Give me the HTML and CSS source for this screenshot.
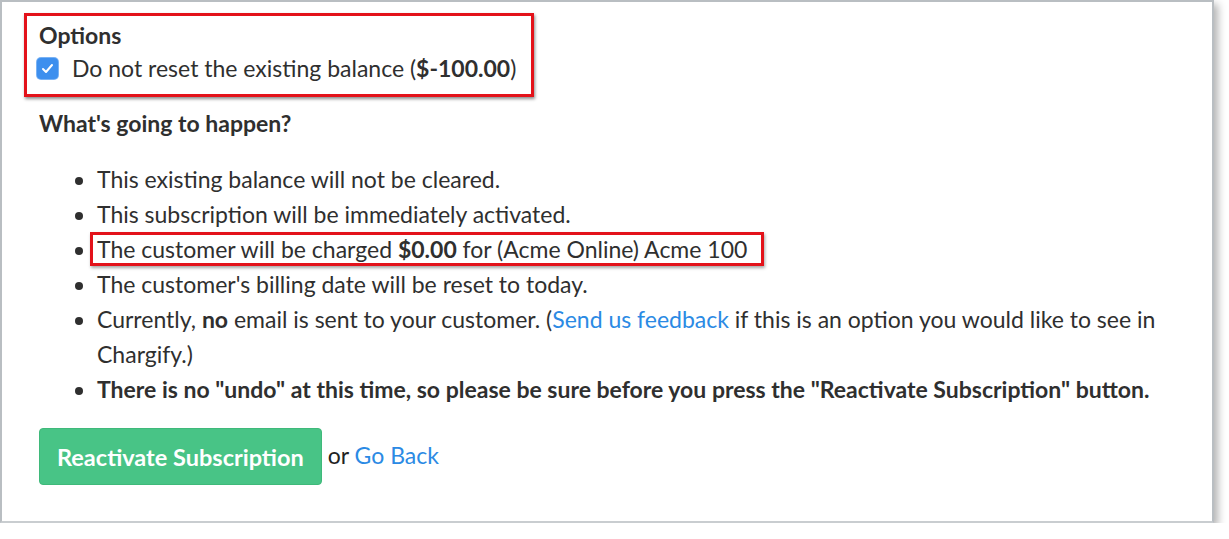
FILE: index.html
```html
<!DOCTYPE html>
<html>
<head>
<meta charset="utf-8">
<link rel="stylesheet" href="styles.css">
</head>
<body>
<div class="frame">
  <div class="options">
    <div class="options-title">Options</div>
    <label class="check-row">
      <span class="checkbox"><svg viewBox="0 0 21 21" width="21" height="21"><path d="M6 11 L9 14 L15 7" fill="none" stroke="#fff" stroke-width="2" stroke-linecap="round" stroke-linejoin="round"/></svg></span>
      <span>Do not reset the existing balance (<b>$-100.00</b>)</span>
    </label>
  </div>
  <h3 class="heading">What's going to happen?</h3>
  <ul class="list">
    <li>This existing balance will not be cleared.</li>
    <li>This subscription will be immediately activated.</li>
    <li><span class="hl">The customer will be charged <b>$0.00</b> for (Acme Online) Acme 100</span></li>
    <li>The customer's billing date will be reset to today.</li>
    <li>Currently, <b>no</b> email is sent to your customer. (<a href="#">Send us feedback</a> if this is an option you would like to see in Chargify.)</li>
    <li><b>There is no "undo" at this time, so please be sure before you press the "Reactivate Subscription" button.</b></li>
  </ul>
  <div class="actions">
    <button class="btn">Reactivate Subscription</button>
    <span class="or">or <a href="#">Go Back</a></span>
  </div>
</div>
</body>
</html>
```
FILE: styles.css
```css
html, body {
  margin: 0;
  padding: 0;
  background: #fff;
}
body {
  font-family: Lato, "Open Sans", sans-serif;
  color: #2f2f2f;
  font-size: 23px;
}
.frame {
  box-sizing: border-box;
  width: 1214px;
  height: 523px;
  border: 2px solid #b9bec2;
  border-bottom-color: #c9cdd0;
  box-shadow: 4px 4px 8px rgba(0, 0, 0, 0.3);
  padding: 11px 0 0 22px;
  background: #fff;
}
.options {
  display: inline-block;
  border: 3px solid #e3121a;
  box-shadow: 1px 2px 3px rgba(0, 0, 0, 0.45);
  padding: 5px 15px 10px 12px;
}
.options-title {
  font-weight: 700;
  line-height: 28px;
}
.check-row {
  display: flex;
  align-items: center;
  gap: 14px;
  line-height: 32px;
  margin-top: 3px;
  margin-left: -2px;
}
.checkbox {
  width: 21px;
  height: 21px;
  border-radius: 4px;
  background: #3d8fee;
  box-shadow: 0 0 0 1px #79b2f4;
  display: flex;
}
.heading {
  margin: 11px 0 0 15px;
  font-size: 23px;
  font-weight: 700;
  line-height: 30px;
}
.list {
  margin: 24px 0 0 15px;
  padding-left: 58px;
  line-height: 35px;
}
.hl {
  border: 3px solid #e3121a;
  box-shadow: 1px 2px 3px rgba(0, 0, 0, 0.35);
  padding: 0 14px 0 4px;
  margin-left: -7px;
}
a {
  color: #2b8ae4;
  text-decoration: none;
}
.actions {
  margin: 21px 0 0 15px;
  display: flex;
  align-items: center;
  gap: 6px;
}
.btn {
  font-family: Lato, "Open Sans", sans-serif;
  font-size: 23.5px;
  font-weight: 700;
  color: #fff;
  background: #48c486;
  border: 1px solid #3fb97a;
  border-radius: 4px;
  height: 57px;
  padding: 0 17px;
}
.or {
  font-size: 23px;
  color: #222;
  margin-top: -3px;
}
```
